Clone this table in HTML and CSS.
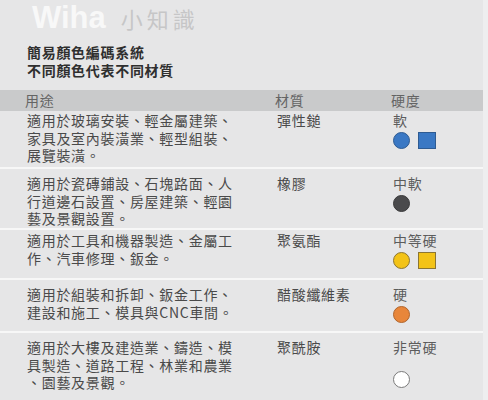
FILE: index.html
```html
<!DOCTYPE html>
<html lang="zh-Hant">
<head>
<meta charset="utf-8">
<title>Wiha 小知識</title>
<link rel="stylesheet" href="styles.css">
</head>
<body>
<main class="page">
  <header class="brand">
    <span class="brand-name">Wiha</span>
    <span class="brand-tag">小知識</span>
  </header>
  <p class="subtitle">簡易顏色編碼系統<br>不同顏色代表不同材質</p>

  <section class="table">
    <div class="row head">
      <span>用途</span><span>材質</span><span>硬度</span>
    </div>

    <div class="row">
      <p class="use">適用於玻璃安裝、輕金屬建築、<br>家具及室內裝潢業、輕型組裝、<br>展覽裝潢。</p>
      <p class="mat">彈性鎚</p>
      <div class="hard">
        <p class="hard-label">軟</p>
        <div class="swatches">
          <span class="dot blue"></span><span class="sq blue"></span>
        </div>
      </div>
    </div>

    <div class="row">
      <p class="use">適用於瓷磚鋪設、石塊路面、人<br>行道邊石設置、房屋建築、輕園<br>藝及景觀設置。</p>
      <p class="mat">橡膠</p>
      <div class="hard">
        <p class="hard-label">中軟</p>
        <div class="swatches">
          <span class="dot dark"></span>
        </div>
      </div>
    </div>

    <div class="row">
      <p class="use">適用於工具和機器製造、金屬工<br>作、汽車修理、鈑金。</p>
      <p class="mat">聚氨酯</p>
      <div class="hard">
        <p class="hard-label">中等硬</p>
        <div class="swatches">
          <span class="dot yellow"></span><span class="sq yellow"></span>
        </div>
      </div>
    </div>

    <div class="row">
      <p class="use">適用於組裝和拆卸、鈑金工作、<br>建設和施工、模具與CNC車間。</p>
      <p class="mat">醋酸纖維素</p>
      <div class="hard">
        <p class="hard-label">硬</p>
        <div class="swatches">
          <span class="dot orange"></span>
        </div>
      </div>
    </div>

    <div class="row">
      <p class="use">適用於大樓及建造業、鑄造、模<br>具製造、道路工程、林業和農業<br>、園藝及景觀。</p>
      <p class="mat">聚酰胺</p>
      <div class="hard">
        <p class="hard-label">非常硬</p>
        <div class="swatches low">
          <span class="dot white"></span>
        </div>
      </div>
    </div>
  </section>
</main>
</body>
</html>
```

FILE: styles.css
```css
* { box-sizing: border-box; }

html, body {
  margin: 0;
  padding: 0;
  background: #eeeeef;
}

body {
  font-family: "Noto Sans CJK TC", "Liberation Sans", sans-serif;
  color: #4a4a4a;
}

.page {
  width: 483px;
  height: 400px;
  background: #e6e6e7;
  overflow: hidden;
}

.brand {
  display: flex;
  align-items: baseline;
  height: 43px;
  padding: 2px 0 0 32px;
}

.brand-name {
  font-family: "Liberation Sans", Arial, sans-serif;
  font-weight: bold;
  font-size: 31px;
  line-height: 30px;
  color: #f8f8f8;
}

.brand-tag {
  margin-left: 15px;
  font-size: 22px;
  letter-spacing: 4px;
  color: #c6c6c7;
}

.subtitle {
  margin: 0 0 11px 27px;
  font-size: 14px;
  font-weight: bold;
  line-height: 18px;
  letter-spacing: 0.7px;
  color: #2f2f2f;
}

.table {
  display: grid;
  grid-template-rows: 21px 56px 61px 50px 53px 1fr;
  height: 310px;
}

.row {
  display: grid;
  grid-template-columns: 250px 116px 1fr;
  align-items: start;
  padding: 6px 0 0 27px;
  font-size: 14px;
  line-height: 17.5px;
  letter-spacing: 0.7px;
}

.row + .row { border-top: 2px solid #f7f7f7; }

.row.head {
  background: #c9cacb;
  padding: 0 0 0 25px;
  line-height: 21px;
  color: #646464;
}

.head + .row { border-top: 0; padding-top: 1px; }
.row:nth-child(4) { padding-top: 2px; }

.row p { margin: 0; }

.hard-label { color: #5c5c5c; }

.swatches {
  display: flex;
  gap: 8px;
  margin-top: 2px;
}

.swatches.low { margin-top: 14px; }

.dot, .sq {
  display: block;
  width: 17px;
  height: 17px;
  border: 1px solid;
}

.dot { border-radius: 50%; }
.sq { width: 18px; }

.blue   { background: #3a78c4; border-color: #2e5b92; }
.dark   { background: #4a4a4c; border-color: #3a3a3b; }
.yellow { background: #f3c317; border-color: #8c7632; }
.orange { background: #e8863a; border-color: #b0652d; }
.white  { background: #ffffff; border-color: #7a7a7a; }
```
